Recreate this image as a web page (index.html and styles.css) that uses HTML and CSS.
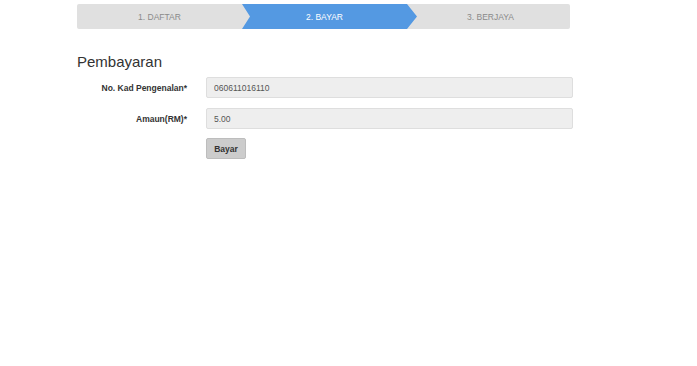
FILE: index.html
```html
<!DOCTYPE html>
<html>
<head>
<meta charset="utf-8">
<link rel="stylesheet" href="styles.css">
</head>
<body>
<div class="page">
  <div class="steps">
    <div class="step step-first">1. DAFTAR</div>
    <div class="step step-active">2. BAYAR</div>
    <div class="step step-last">3. BERJAYA</div>
  </div>
  <h1 class="title">Pembayaran</h1>
  <form class="form">
    <div class="row">
      <label class="label">No. Kad Pengenalan*</label>
      <input class="field" type="text" value="060611016110" readonly>
    </div>
    <div class="row">
      <label class="label">Amaun(RM)*</label>
      <input class="field" type="text" value="5.00" readonly>
    </div>
    <div class="row">
      <span class="label"></span>
      <button class="btn" type="button">Bayar</button>
    </div>
  </form>
</div>
</body>
</html>
```

FILE: styles.css
```css
html, body {
  margin: 0;
  padding: 0;
  background: #fff;
  font-family: "Liberation Sans", Arial, sans-serif;
}
.page {
  margin-left: 77px;
  width: 497px;
  padding-top: 4px;
}
.steps {
  display: flex;
  width: 493px;
  height: 25px;
}
.step {
  height: 25px;
  display: flex;
  align-items: center;
  justify-content: center;
  font-size: 8.5px;
  color: #8a8a8a;
  background: #e0e0e0;
  box-sizing: border-box;
}
.step-first {
  width: 173px;
  margin-right: -8px;
  padding-right: 8px;
  border-radius: 2px 0 0 2px;
}
.step-active {
  position: relative;
  z-index: 1;
  width: 175px;
  margin-right: -10px;
  padding-right: 10px;
  background: #5499e2;
  color: #fff;
  clip-path: polygon(0 0, calc(100% - 10px) 0, 100% 50%, calc(100% - 10px) 100%, 0 100%, 8px 50%);
}
.step-last {
  width: 163px;
  padding-left: 4px;
  border-radius: 0 2px 2px 0;
}
.title {
  margin: 23px 0 0 0;
  font-size: 15px;
  font-weight: normal;
  color: #333;
  line-height: 20px;
  height: 20px;
}
.form {
  margin-top: 5px;
  display: flex;
  flex-direction: column;
  gap: 10px;
}
.row {
  display: flex;
  align-items: center;
  gap: 19px;
}
.label {
  width: 110px;
  text-align: right;
  font-size: 8.5px;
  font-weight: bold;
  color: #333;
}
.field {
  width: 367px;
  height: 21px;
  box-sizing: border-box;
  margin: 0;
  padding: 0 7px;
  border: 1px solid #dedede;
  border-radius: 2px;
  background: #eeeeee;
  font-family: "Liberation Sans", Arial, sans-serif;
  font-size: 8.5px;
  color: #555;
  outline: none;
}
.btn {
  margin: -1px 0 0 0;
  width: 40px;
  height: 21px;
  box-sizing: border-box;
  padding: 0;
  border: 1px solid #bdbdbd;
  border-radius: 2px;
  background: #cccccc;
  font-family: "Liberation Sans", Arial, sans-serif;
  font-size: 8.5px;
  font-weight: bold;
  color: #333;
}
```
